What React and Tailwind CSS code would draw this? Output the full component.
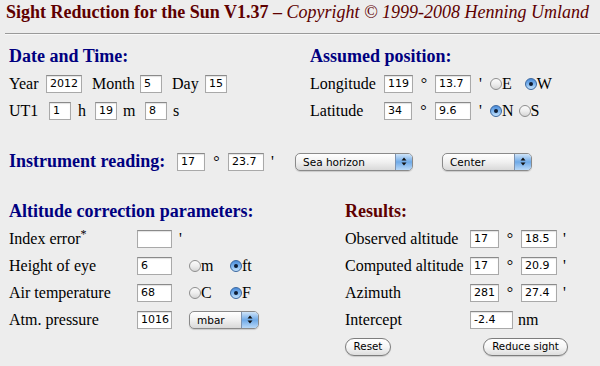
import React from "react";

function Field({ w, v }) {
  return (
    <div
      className={`h-[18px] ${w} shrink-0 bg-white border border-[#a9a9a9] border-t-[#8a8a8a] shadow-[inset_0_1px_1px_rgba(0,0,0,0.12)] font-['DejaVu_Sans',sans-serif] text-[11px] leading-[16px] pl-[3px] text-black whitespace-nowrap overflow-hidden`}
    >
      {v}
    </div>
  );
}

function Radio({ checked, cls = "" }) {
  if (checked) {
    return (
      <span
        className={`w-[12px] h-[12px] shrink-0 rounded-full border border-[#3a679f] bg-linear-to-b from-[#4a8bd8] via-[#7cb4ee] to-[#c4e2fb] flex items-center justify-center ${cls}`}
      >
        <span className="w-[4px] h-[4px] rounded-full bg-[#0f1d33]" />
      </span>
    );
  }
  return (
    <span
      className={`w-[12px] h-[12px] shrink-0 rounded-full border border-[#8e8e8e] bg-linear-to-b from-[#fbfbfb] via-[#eeeeee] to-[#d6d6d6] ${cls}`}
    />
  );
}

function Select({ w, label, cls = "" }) {
  return (
    <div
      className={`h-[18px] ${w} shrink-0 rounded-[5px] border border-[#8a8a8a] bg-linear-to-b from-white via-[#f0f0f0] to-[#d9d9d9] flex items-stretch overflow-hidden shadow-[0_1px_1px_rgba(0,0,0,0.15)] ${cls}`}
    >
      <span className="flex-1 pl-[7px] font-['DejaVu_Sans',sans-serif] text-[10.5px] leading-[16px] text-black whitespace-nowrap">
        {label}
      </span>
      <span className="w-[17px] border-l border-[#7c92b0] bg-linear-to-b from-[#cfe4f8] via-[#6ea9e7] to-[#b8d8f7] flex items-center justify-center">
        <svg width="6" height="9" viewBox="0 0 6 9">
          <polygon points="0.5,3.6 3,0.6 5.5,3.6" fill="#111" />
          <polygon points="0.5,5.4 3,8.4 5.5,5.4" fill="#111" />
        </svg>
      </span>
    </div>
  );
}

function Btn({ w, label, cls = "" }) {
  return (
    <div
      className={`h-[18px] ${w} shrink-0 rounded-full border border-[#7d7d7d] bg-linear-to-b from-white via-[#f6f6f6] to-[#dedede] shadow-[0_1px_1px_rgba(0,0,0,0.15)] flex items-center justify-center font-['DejaVu_Sans',sans-serif] text-[10.3px] text-black whitespace-nowrap ${cls}`}
    >
      {label}
    </div>
  );
}

export default function App() {
  return (
    <div className="w-[600px] h-[366px] overflow-hidden bg-[#ededed] font-['Liberation_Serif',serif] text-black">
      <div className="pl-[6px] pt-[2px] text-[18px] leading-[21px] text-[#5e0000] whitespace-nowrap">
        <span className="font-bold">Sight Reduction for the Sun V1.37 –</span>{" "}
        <span className="italic">Copyright © 1999-2008 Henning Umland</span>
      </div>
      <div className="ml-[5px] mt-[10px] h-[2px] border-t border-t-[#9a9a9a] border-b border-b-[#f8f8f8]" />

      {/* top section */}
      <div className="flex mt-[11px]">
        <div className="w-[300px] pl-[9px]">
          <div className="text-[18px] leading-[21px] font-bold text-[#000080]">Date and Time:</div>
          <div className="mt-[3px] h-[27px] flex items-center text-[16px] leading-[18px]">
            <span className="w-[37px]">Year</span>
            <Field w="w-[36px]" v="2012" />
            <span className="ml-[10px] w-[48px]">Month</span>
            <Field w="w-[22px]" v="5" />
            <span className="ml-[10px] w-[33px]">Day</span>
            <Field w="w-[22px]" v="15" />
          </div>
          <div className="h-[27px] flex items-center text-[16px] leading-[18px]">
            <span className="w-[40px]">UT1</span>
            <Field w="w-[22px]" v="1" />
            <span className="ml-[7px] w-[17px]">h</span>
            <Field w="w-[22px]" v="19" />
            <span className="ml-[6px] w-[22px]">m</span>
            <Field w="w-[22px]" v="8" />
            <span className="ml-[6px]">s</span>
          </div>
        </div>
        <div className="flex-1 pl-[10px]">
          <div className="text-[18px] leading-[21px] font-bold text-[#000080]">Assumed position:</div>
          <div className="mt-[3px] h-[27px] flex items-center text-[16px] leading-[18px]">
            <span className="w-[74px]">Longitude</span>
            <Field w="w-[29px]" v="119" />
            <span className="w-[22px] text-center">°</span>
            <Field w="w-[36px]" v="13.7" />
            <span className="w-[19px] pl-[8px]">'</span>
            <Radio />
            <span>E</span>
            <Radio checked cls="ml-[13px]" />
            <span>W</span>
          </div>
          <div className="h-[27px] flex items-center text-[16px] leading-[18px]">
            <span className="w-[74px]">Latitude</span>
            <Field w="w-[28px]" v="34" />
            <span className="w-[23px] text-center">°</span>
            <Field w="w-[36px]" v="9.6" />
            <span className="w-[19px] pl-[8px]">'</span>
            <Radio checked />
            <span>N</span>
            <Radio cls="ml-[5px]" />
            <span>S</span>
          </div>
        </div>
      </div>

      {/* instrument reading */}
      <div className="mt-[24px] h-[27px] flex items-center pl-[9px] text-[16px] leading-[18px]">
        <span className="w-[168px] text-[18px] leading-[21px] font-bold text-[#000080] whitespace-nowrap">
          Instrument reading:
        </span>
        <Field w="w-[28px]" v="17" />
        <span className="w-[23px] text-center">°</span>
        <Field w="w-[36px]" v="23.7" />
        <span className="w-[31px] pl-[7px]">'</span>
        <Select w="w-[118px]" label="Sea horizon" />
        <Select w="w-[90px]" label="Center" cls="ml-[29px]" />
      </div>

      {/* bottom section */}
      <div className="flex mt-[26px]">
        <div className="w-[345px] pl-[9px]">
          <div className="text-[18px] leading-[21px] font-bold text-[#000080] whitespace-nowrap">
            Altitude correction parameters:
          </div>
          <div className="mt-[3px] h-[27px] flex items-center text-[16px] leading-[18px]">
            <span className="w-[128px]">
              Index error<sup>*</sup>
            </span>
            <Field w="w-[35px]" v="" />
            <span className="ml-[7px]">'</span>
          </div>
          <div className="h-[27px] flex items-center text-[16px] leading-[18px]">
            <span className="w-[128px]">Height of eye</span>
            <Field w="w-[35px]" v="6" />
            <Radio cls="ml-[17px]" />
            <span className="w-[29px]">m</span>
            <Radio checked />
            <span>ft</span>
          </div>
          <div className="h-[27px] flex items-center text-[16px] leading-[18px]">
            <span className="w-[128px]">Air temperature</span>
            <Field w="w-[35px]" v="68" />
            <Radio cls="ml-[17px]" />
            <span className="w-[29px]">C</span>
            <Radio checked />
            <span>F</span>
          </div>
          <div className="h-[27px] flex items-center text-[16px] leading-[18px]">
            <span className="w-[128px]">Atm. pressure</span>
            <Field w="w-[35px]" v="1016" />
            <Select w="w-[70px]" label="mbar" cls="ml-[17px]" />
          </div>
        </div>
        <div className="flex-1">
          <div className="text-[18px] leading-[21px] font-bold text-[#5e0000]">Results:</div>
          <div className="mt-[3px] h-[27px] flex items-center text-[16px] leading-[18px]">
            <span className="w-[125px] whitespace-nowrap">Observed altitude</span>
            <Field w="w-[29px]" v="17" />
            <span className="w-[22px] text-center">°</span>
            <Field w="w-[36px]" v="18.5" />
            <span className="pl-[6px]">'</span>
          </div>
          <div className="h-[27px] flex items-center text-[16px] leading-[18px]">
            <span className="w-[125px] whitespace-nowrap">Computed altitude</span>
            <Field w="w-[29px]" v="17" />
            <span className="w-[22px] text-center">°</span>
            <Field w="w-[36px]" v="20.9" />
            <span className="pl-[6px]">'</span>
          </div>
          <div className="h-[27px] flex items-center text-[16px] leading-[18px]">
            <span className="w-[125px]">Azimuth</span>
            <Field w="w-[29px]" v="281" />
            <span className="w-[22px] text-center">°</span>
            <Field w="w-[36px]" v="27.4" />
            <span className="pl-[6px]">'</span>
          </div>
          <div className="h-[27px] flex items-center text-[16px] leading-[18px]">
            <span className="w-[125px]">Intercept</span>
            <Field w="w-[43px]" v="-2.4" />
            <span className="ml-[5px]">nm</span>
          </div>
          <div className="h-[27px] flex items-center">
            <Btn w="w-[46px]" label="Reset" />
            <Btn w="w-[85px]" label="Reduce sight" cls="ml-[92px]" />
          </div>
        </div>
      </div>
    </div>
  );
}
